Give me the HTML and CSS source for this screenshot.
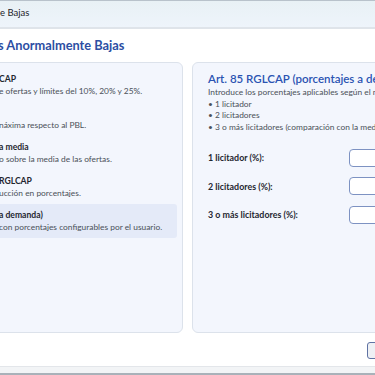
FILE: index.html
```html
<!DOCTYPE html>
<html lang="es">
<head>
  <meta charset="UTF-8">
  <title>Ofertas Anormalmente Bajas</title>
  <link rel="stylesheet" href="styles.css">
</head>
<body>
  <div class="titlebar">e Bajas</div>

  <div class="app">
    <h1 class="app-title">s Anormalmente Bajas</h1>

    <div class="panels">
      <div class="panel method-list">
        <div class="method">
          <div class="method-name">CAP</div>
          <div class="method-desc">e ofertas y límites del 10%, 20% y 25%.</div>
        </div>
        <div class="method">
          <div class="method-name">&nbsp;</div>
          <div class="method-desc">náxima respecto al PBL.</div>
        </div>
        <div class="method">
          <div class="method-name">a media</div>
          <div class="method-desc">o sobre la media de las ofertas.</div>
        </div>
        <div class="method">
          <div class="method-name">RGLCAP</div>
          <div class="method-desc">ucción en porcentajes.</div>
        </div>
        <div class="method selected">
          <div class="method-name">a demanda)</div>
          <div class="method-desc">con porcentajes configurables por el usuario.</div>
        </div>
      </div>

      <div class="panel detail">
        <h2 class="detail-title">Art. 85 RGLCAP (porcentajes a demanda)</h2>
        <div class="detail-intro">
          Introduce los porcentajes aplicables según el número de licitadores:<br>
          • 1 licitador<br>
          • 2 licitadores<br>
          • 3 o más licitadores (comparación con la media)
        </div>

        <div class="fields">
          <div class="field">
            <label>1 licitador (%):</label>
            <input type="text">
          </div>
          <div class="field">
            <label>2 licitadores (%):</label>
            <input type="text">
          </div>
          <div class="field">
            <label>3 o más licitadores (%):</label>
            <input type="text">
          </div>
        </div>
      </div>
    </div>

    <div class="actions">
      <button>Calcular</button>
    </div>
  </div>

  <div class="statusbar"></div>
</body>
</html>
```

FILE: styles.css
```css
html, body {
  margin: 0;
  height: 375px;
  overflow: hidden;
}

body {
  font-family: Lato, "Open Sans", sans-serif;
  background-color: #ffffff;
  color: #2b2f36;
  display: flex;
  flex-direction: column;
}

.titlebar {
  height: 26px;
  line-height: 24px;
  border-top: 1px solid #b8c2cb;
  border-bottom: 2px solid #dfe4ea;
  background: linear-gradient(#e8f1f5, #eef4fb);
  font-size: 9.5px;
  color: #1d2329;
  white-space: nowrap;
}

.app {
  flex: 1;
  display: flex;
  flex-direction: column;
}

.app-title {
  margin: 7px 0 0 -2px;
  font-size: 12.8px;
  line-height: 18px;
  font-weight: 700;
  color: #2c4ea3;
  white-space: nowrap;
}

.panels {
  display: flex;
  gap: 9px;
  margin-top: 8px;
  height: 271px;
}

.panel {
  box-sizing: border-box;
  flex-shrink: 0;
  background-color: #f3f6fd;
  border: 1px solid #dce2eb;
  border-radius: 6px;
  white-space: nowrap;
  overflow: hidden;
}

.method-list {
  width: 191px;
  margin-left: -8px;
  padding: 5px 5px 0 0;
}

.method {
  padding: 5px 6px;
  border-radius: 3px;
}

.method.selected {
  background-color: #e4eaf8;
}

.method-name {
  font-size: 8.6px;
  line-height: 12px;
  font-weight: 700;
  color: #1f2630;
}

.method-desc {
  font-size: 8.4px;
  line-height: 12px;
  color: #4a5058;
}

.detail {
  width: 260px;
  padding: 8px 0 0 15px;
}

.detail-title {
  margin: 0;
  font-size: 11.5px;
  line-height: 16px;
  font-weight: 600;
  color: #2a53b2;
}

.detail-intro {
  font-size: 8.4px;
  line-height: 11.7px;
  color: #4a5058;
}

.fields {
  display: flex;
  flex-direction: column;
  gap: 10.5px;
  margin-top: 15px;
}

.field {
  display: flex;
  align-items: center;
  height: 18px;
}

.field label {
  width: 141px;
  font-size: 8.9px;
  font-weight: 700;
  color: #1f2630;
}

.field input {
  box-sizing: border-box;
  width: 80px;
  height: 18px;
  border: 1px solid #7d92c2;
  border-radius: 4px;
  background-color: #ffffff;
}

.actions {
  display: flex;
  padding: 9px 0 0 367px;
}

.actions button {
  flex-shrink: 0;
  width: 70px;
  height: 17px;
  border: 1px solid #5f72a3;
  border-radius: 3px;
  background-color: #eef0f4;
  font-family: inherit;
  font-size: 8.5px;
  padding: 0;
}

.statusbar {
  height: 6px;
  border-top: 1px solid #e3e6ea;
  border-bottom: 2px solid #a9b1b9;
  background-color: #f2f4f6;
}
```
